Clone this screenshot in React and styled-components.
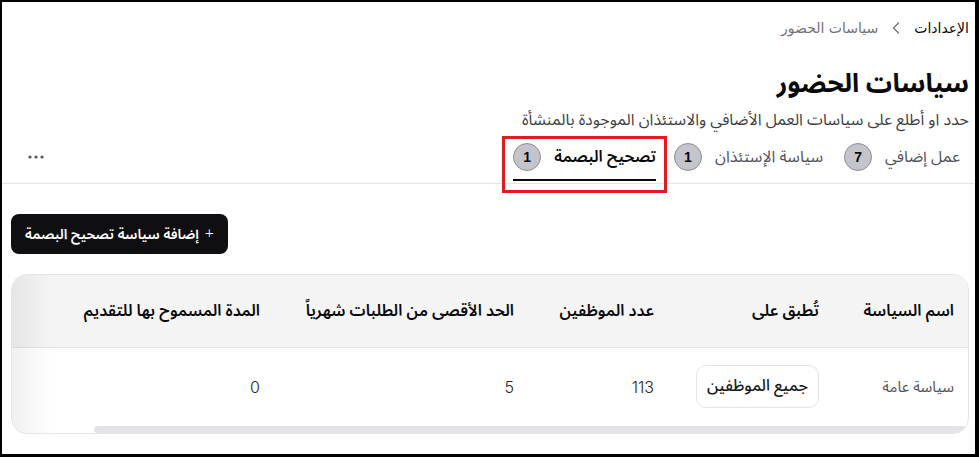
import { styled, createGlobalStyle } from 'styled-components';

const GlobalStyle = createGlobalStyle`
  * { box-sizing: border-box; }
  html, body { margin: 0; padding: 0; background: #fff; }
  body {
    font-family: "Noto Sans Arabic", "Noto Sans", "DejaVu Sans", sans-serif;
    color: #09090b;
  }
`;

const Frame = styled.div`
  direction: rtl;
  width: 979px;
  height: 457px;
  border-style: solid;
  border-color: #000;
  border-width: 2px 4px 3px 2px;
  overflow: hidden;
  display: flex;
  flex-direction: column;
`;

const Header = styled.header`
  padding: 0 6px 0 9px;
`;

const Crumbs = styled.nav`
  display: flex;
  align-items: center;
  gap: 8px;
  height: 52px;
  font-size: 14px;
  font-family: "DejaVu Sans", sans-serif;
`;

const Crumb = styled.span`
  color: ${({ $current }) => $current ? '#71717a' : '#09090b'};
`;

const Title = styled.h1`
  margin: 13px 0 0;
  font-size: 26px;
  font-weight: 700;
  line-height: 34px;
`;

const Subtitle = styled.p`
  margin: 7px 0 0;
  font-size: 16px;
  line-height: 24px;
  color: #3f3f46;
`;

const TabBar = styled.div`
  display: flex;
  align-items: stretch;
  border-bottom: 1px solid #e4e4e7;
  margin: 0 -6px 0 -9px;
  padding: 0 15px 0 26px;
  height: 52px;
`;

const Tab = styled.button`
  all: unset;
  position: relative;
  display: flex;
  align-items: center;
  gap: 13px;
  padding: 0 0 2px;
  margin-left: 21px;
  font-size: 16px;
  font-family: inherit;
  color: ${({ $active }) => $active ? '#09090b' : '#52525b'};
  font-weight: ${({ $active }) => $active ? 600 : 400};
  cursor: pointer;

  &::after {
    content: '';
    position: absolute;
    left: 0;
    right: 0;
    bottom: 1px;
    height: 2px;
    background: ${({ $active }) => $active ? '#09090b' : 'transparent'};
  }
`;

const Highlight = styled.div`
  display: flex;
  align-items: stretch;
  margin: 4px -14px -10px 0;
  padding: 0 8px 8px;
  border: 3px solid #e31b1b;

  & > button { margin-left: 0; padding-bottom: 7px; }
`;

const Badge = styled.span`
  display: inline-grid;
  place-items: center;
  width: 28px;
  height: 28px;
  border-radius: 50%;
  background: #c4c4cc;
  border: 1px solid #8e8e96;
  font-size: 14px;
  font-weight: 700;
  color: #09090b;
  font-family: "Liberation Sans", sans-serif;
`;

const More = styled.button`
  all: unset;
  margin-right: auto;
  align-self: center;
  display: flex;
  padding-bottom: 2px;
  cursor: pointer;
`;

const Body = styled.main`
  padding: 30px 4px 0 9px;
  display: flex;
  flex-direction: column;
  align-items: flex-start;
  gap: 20px;
`;

const PrimaryButton = styled.button`
  all: unset;
  align-self: flex-end;
  display: inline-flex;
  align-items: center;
  gap: 6px;
  height: 40px;
  padding: 0 14px;
  border-radius: 8px;
  background: #0f0f12;
  color: #fff;
  font-family: inherit;
  font-size: 14px;
  font-weight: 600;
  cursor: pointer;

  span { font-weight: 300; font-size: 16px; }
`;

const Card = styled.div`
  position: relative;
  width: 958px;
  align-self: flex-end;
  border: 1px solid #e4e4e7;
  border-radius: 16px;
  overflow: hidden;

  &::before {
    content: '';
    position: absolute;
    inset: 0 auto 0 0;
    width: 40px;
    background: linear-gradient(to right, rgba(0,0,0,0.06), rgba(0,0,0,0));
    pointer-events: none;
  }
`;

const Table = styled.table`
  width: 100%;
  border-collapse: collapse;
  font-size: 15px;
`;

const Th = styled.th`
  height: 72px;
  padding: 0 14px 0 12px;
  background: #f4f4f5;
  border-bottom: 1px solid #e4e4e7;
  text-align: right;
  font-size: 16px;
  font-weight: 600;
  width: ${({ $w }) => $w}px;
`;

const Td = styled.td`
  height: 79px;
  padding: 0 14px 0 12px;
  text-align: right;
  color: ${({ $muted }) => $muted ? '#52525b' : '#27272a'};
  font-family: ${({ $num }) => $num ? '"Inter", sans-serif' : 'inherit'};
  font-weight: ${({ $num }) => $num ? 300 : 400};
  font-size: ${({ $num }) => $num ? '16px' : '15px'};
`;

const Chip = styled.span`
  display: inline-block;
  padding: 3px 10px 4px;
  border: 1px solid #e4e4e7;
  border-radius: 10px;
  font-size: 16px;
  font-weight: 500;
  color: #18181b;
`;

const Scrollbar = styled.div`
  height: 7px;
  margin: 0 0 0 82px;
  border-radius: 4px;
  background: #e4e4e7;
`;

const tabs = [
  { label: 'عمل إضافي', count: 7 },
  { label: 'سياسة الإستئذان', count: 1 },
];

export default function App() {
  return (
    <>
      <GlobalStyle />
      <Frame>
        <Header>
          <Crumbs>
            <Crumb>الإعدادات</Crumb>
            <svg width="20" height="20" viewBox="0 0 24 24" fill="none" stroke="#71717a" strokeWidth="1.5" strokeLinecap="round" strokeLinejoin="round">
              <path d="M15 18l-6-6 6-6" />
            </svg>
            <Crumb $current>سياسات الحضور</Crumb>
          </Crumbs>
          <Title>سياسات الحضور</Title>
          <Subtitle>حدد او أطلع على سياسات العمل الأضافي والاستئذان الموجودة بالمنشأة</Subtitle>
          <TabBar>
            {tabs.map(t => (
              <Tab key={t.label}>
                {t.label}
                <Badge>{t.count}</Badge>
              </Tab>
            ))}
            <Highlight>
              <Tab $active>
                تصحيح البصمة
                <Badge>1</Badge>
              </Tab>
            </Highlight>
            <More aria-label="المزيد">
              <svg width="16" height="4" viewBox="0 0 16 4" fill="#52525b">
                <circle cx="2" cy="2" r="1.6" />
                <circle cx="8" cy="2" r="1.6" />
                <circle cx="14" cy="2" r="1.6" />
              </svg>
            </More>
          </TabBar>
        </Header>
        <Body>
          <PrimaryButton>
            <span>+</span>
            إضافة سياسة تصحيح البصمة
          </PrimaryButton>
          <Card>
            <Table>
              <thead>
                <tr>
                  <Th $w={135}>اسم السياسة</Th>
                  <Th $w={165}>تُطبق على</Th>
                  <Th $w={140}>عدد الموظفين</Th>
                  <Th $w={254}>الحد الأقصى من الطلبات شهرياً</Th>
                  <Th>المدة المسموح بها للتقديم</Th>
                </tr>
              </thead>
              <tbody>
                <tr>
                  <Td $muted>سياسة عامة</Td>
                  <Td><Chip>جميع الموظفين</Chip></Td>
                  <Td $num>113</Td>
                  <Td $num>5</Td>
                  <Td $num>0</Td>
                </tr>
              </tbody>
            </Table>
            <Scrollbar />
          </Card>
        </Body>
      </Frame>
    </>
  );
}
